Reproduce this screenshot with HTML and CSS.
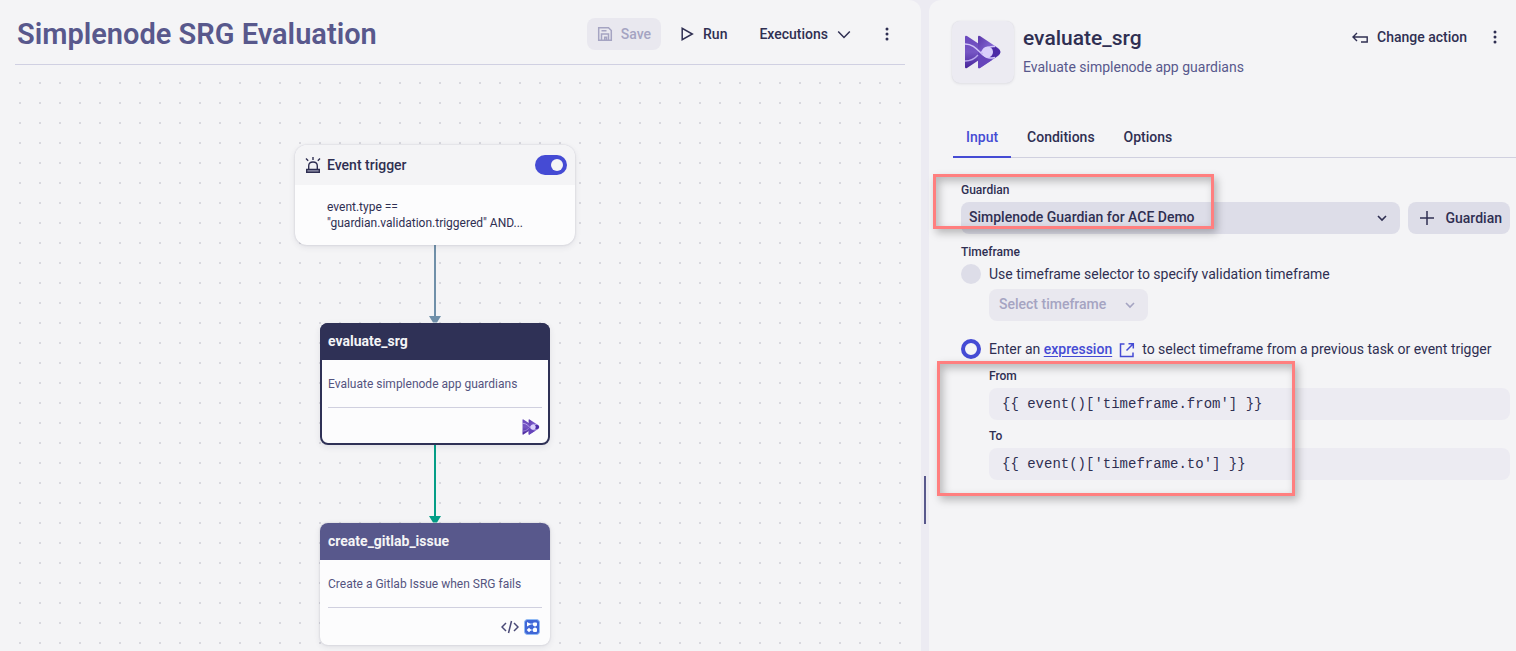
FILE: index.html
```html
<!DOCTYPE html>
<html lang="en">
<head>
<meta charset="utf-8">
<meta name="viewport" content="width=device-width, initial-scale=1">
<title>Simplenode SRG Evaluation</title>
<link rel="stylesheet" href="styles.css">
</head>
<body>
<svg class="defs" aria-hidden="true">
  <defs>
    <linearGradient id="violet" x1="0" y1="0" x2="1" y2="1">
      <stop offset="0" stop-color="#5a36a8"/><stop offset=".5" stop-color="#8568d6"/><stop offset="1" stop-color="#4526a0"/>
    </linearGradient>
    <linearGradient id="violet-dark" x1="0" y1="0" x2="0" y2="1">
      <stop offset="0" stop-color="#6a48bd"/><stop offset=".5" stop-color="#7656c4"/><stop offset="1" stop-color="#47259a"/>
    </linearGradient>
    <symbol id="guardian" viewBox="0 0 36 34">
      <path d="M0 2Q0 0 2 1L14 9V25L2 33Q0 34 0 32Z" fill="url(#violet-dark)"/>
      <path d="M13 2Q13 0 15 1L33 13Q38 17 33 21L15 33Q13 34 13 32Z" fill="url(#violet)"/>
      <path d="M13 14V32Q13 34 15 33L27 25Q19 23 13 14Z" fill="#6645bb"/>
      <path d="M0 26Q8 26 13 20" fill="none" stroke="#b9a8ee" stroke-width="1.300"/>
      <path d="M24 11.500H30L33.500 14Q37 17 33.500 20L30 22.500H24Q28 17 24 11.500Z" fill="#4c2ba6"/>
      <path d="M0 9C9 9 13 16 18 20S26 23 30 22.500M16 18C19 13 24 11 30 11.500" fill="none" stroke="#d0c4f8" stroke-width="1.500"/>
      <circle cx="22.500" cy="17" r="5.500" fill="#d9cffb"/>
    </symbol>
  </defs>
</svg>
<main class="layout">
  <section class="workflow">
    <header class="toolbar">
      <h1 class="toolbar-title">Simplenode SRG Evaluation</h1>
      <div class="toolbar-actions">
        <button class="btn btn-save" disabled>
          <svg width="16" height="16" viewBox="0 0 16 16" fill="none" stroke="currentColor" stroke-width="1.500"><path d="M1.700 1.700H11.500L14.300 4.500V14.300H1.700ZM4.500 14V8H11.500V14M4.500 4.800H9.500M7.700 14V11.300H9.500V14"/></svg>
          Save</button>
        <button class="btn">
          <svg width="13" height="16" viewBox="0 0 13 16" fill="none" stroke="currentColor" stroke-width="1.500"><path d="M1.200 2.300V13.700L11.300 8Z"/></svg>
          Run</button>
        <button class="btn">Executions
          <svg width="14" height="16" viewBox="0 0 14 16" fill="none" stroke="currentColor" stroke-width="1.500"><path d="M1.200 5.500L7 11.500L12.800 5.500"/></svg>
        </button>
        <button class="btn-menu" aria-label="Workflow menu">
          <svg width="4" height="14" viewBox="0 0 4 14" fill="currentColor"><circle cx="2" cy="2" r="1.500"/><circle cx="2" cy="7" r="1.500"/><circle cx="2" cy="12" r="1.500"/></svg>
        </button>
      </div>
    </header>
    <div class="canvas">
      <svg class="edge edge-trigger" width="12" height="78" viewBox="0 0 12 78" fill="#7090a9"><path d="M5 0H7V71H5ZM0 71H12L8 77.500H4Z"/></svg>
      <svg class="edge edge-task" width="12" height="78" viewBox="0 0 12 78" fill="#049e87"><path d="M5 0H7V71H5ZM0 71H12L8 77.500H4Z"/></svg>
      <article class="trigger">
        <div class="trigger-head">
          <svg width="16" height="18" viewBox="0 0 16 18" fill="none" stroke="#2f2f52" stroke-width="1.400"><path d="M8 1V4M1 2.500L3.200 4.700M15 2.500L12.800 4.700M3.700 13V10Q3.700 6 8 6T12.300 10V13"/><path d="M1.700 13.500H14.300V16.300H1.700Z" fill="#9d9db4"/></svg>
          <label for="trigger-on" class="trigger-name">Event trigger</label>
          <input id="trigger-on" class="switch" type="checkbox" role="switch" checked>
        </div>
        <p class="trigger-query">event.type ==<br>"guardian.validation.triggered" AND...</p>
      </article>
      <article class="task task-evaluate">
        <h2 class="task-name">evaluate_srg</h2>
        <p class="task-text">Evaluate simplenode app guardians</p>
        <div class="task-icons"><svg width="18" height="16"><use href="#guardian"/></svg></div>
      </article>
      <article class="task task-create">
        <h2 class="task-name">create_gitlab_issue</h2>
        <p class="task-text">Create a Gitlab Issue when SRG fails</p>
        <div class="task-icons">
          <svg width="18" height="14" viewBox="0 0 18 14" fill="none" stroke="#4a4a78" stroke-width="1.500"><path d="M5 3L1 7L5 11M13 3L17 7L13 11M10.500 1L7.500 13"/></svg>
          <svg width="16" height="16" viewBox="0 0 16 16"><rect x=".5" y=".5" width="15" height="15" rx="3" fill="#3f66d6" stroke="#91bbf5"/><path d="M5 5H11V11H5" fill="none" stroke="#bcd5ff"/><g fill="#fff"><path d="M3 3L7 5.200L3 7.400Z"/><rect x="9" y="3.500" width="4" height="3.500" rx="1"/><rect x="9" y="9" width="4" height="4" rx="1"/><path d="M5 8.700L7.300 11L5 13.300L2.700 11Z"/></g></svg>
        </div>
      </article>
    </div>
  </section>
  <div class="splitter"><span class="splitter-handle"></span></div>
  <aside class="panel">
    <header class="panel-head">
      <div class="panel-icon"><svg width="36" height="34"><use href="#guardian"/></svg></div>
      <div class="panel-heading">
        <h2 class="panel-title">evaluate_srg</h2>
        <p class="panel-subtitle">Evaluate simplenode app guardians</p>
      </div>
      <div class="panel-actions">
        <button class="btn btn-change">
          <svg width="16" height="14" viewBox="0 0 16 14" fill="none" stroke="currentColor" stroke-width="1.400"><path d="M5 3L1 7L5 11M1 7H15.200V12H9"/></svg>
          Change action</button>
        <button class="btn-menu" aria-label="Action menu">
          <svg width="4" height="14" viewBox="0 0 4 14" fill="currentColor"><circle cx="2" cy="2" r="1.500"/><circle cx="2" cy="7" r="1.500"/><circle cx="2" cy="12" r="1.500"/></svg>
        </button>
      </div>
    </header>
    <nav class="tabs">
      <button class="tab tab-active">Input</button>
      <button class="tab">Conditions</button>
      <button class="tab">Options</button>
    </nav>
    <form class="form">
      <label class="caption" for="guardian-select">Guardian</label>
      <div class="guardian-row">
        <div class="select-wrap">
          <select id="guardian-select" class="select"><option>Simplenode Guardian for ACE Demo</option></select>
          <svg class="select-arrow" width="10" height="8" viewBox="0 0 10 8" fill="none" stroke="#2f2f52" stroke-width="1.600"><path d="M1 2L5 6L9 2"/></svg>
        </div>
        <button type="button" class="btn btn-add">
          <svg width="16" height="16" viewBox="0 0 16 16" fill="none" stroke="currentColor" stroke-width="1.500"><path d="M8 1V15M1 8H15"/></svg>
          Guardian</button>
      </div>
      <p class="caption">Timeframe</p>
      <div class="choice">
        <input id="by-selector" class="radio" type="radio" name="timeframe">
        <label for="by-selector">Use timeframe selector to specify validation timeframe</label>
      </div>
      <div class="indent">
        <div class="select-wrap select-wrap-small">
          <select class="select" aria-label="Select timeframe" disabled><option>Select timeframe</option></select>
          <svg class="select-arrow" width="10" height="8" viewBox="0 0 10 8" fill="none" stroke="#a5a4c2" stroke-width="1.600"><path d="M1 2L5 6L9 2"/></svg>
        </div>
      </div>
      <div class="choice choice-expression">
        <input id="by-expression" class="radio" type="radio" name="timeframe" checked>
        <label for="by-expression">Enter an <a class="link" href="#expression">expression</a><svg class="external" width="16" height="16" viewBox="0 0 16 16" fill="none" stroke="#454bd4" stroke-width="1.500"><path d="M5.500 2H1.500V14.500H14V10.500M7.500 8.500L14 2M9.500 1.700H14.300V6.500"/></svg>to select timeframe from a previous task or event trigger</label>
      </div>
      <div class="indent fields">
        <label class="caption" for="from">From</label>
        <input id="from" class="code" type="text" value="{{ event()['timeframe.from'] }}">
        <label class="caption" for="to">To</label>
        <input id="to" class="code" type="text" value="{{ event()['timeframe.to'] }}">
      </div>
    </form>
    <div class="mark mark-guardian"></div>
    <div class="mark mark-range"></div>
  </aside>
</main>
</body>
</html>
```

FILE: styles.css
```css
* { box-sizing: border-box; }

body {
  margin: 0;
  background: #ecebf2;
  color: #2f2f52;
  font: 14px/20px Roboto, "Liberation Sans", sans-serif;
}

h1, h2, p { margin: 0; }
button, input, select { font: inherit; color: inherit; }
svg { flex: none; display: block; }
.defs { position: absolute; width: 0; height: 0; }

.layout {
  display: grid;
  grid-template-columns: minmax(0, 921fr) 8px minmax(0, 587fr);
  min-height: 100vh;
}

.workflow {
  display: flex;
  flex-direction: column;
  padding: 0 16px 0 15px;
  background: #f4f4f6;
  border-radius: 0 12px 0 0;
}

.toolbar {
  display: flex;
  align-items: center;
  justify-content: space-between;
  padding: 18px 2px 14px;
  border-bottom: 1px solid #d0d0e2;
}
.toolbar-title { font-size: 29px; line-height: 32px; font-weight: 600; color: #58588c; }
.toolbar-actions { display: flex; gap: 8px; }

.btn {
  display: flex;
  align-items: center;
  gap: 9px;
  height: 32px;
  padding: 0 12px;
  border: 0;
  border-radius: 8px;
  background: none;
  font-weight: 500;
  white-space: nowrap;
}
.btn-save { gap: 8px; padding: 0 10px; background: #e9e8ef; color: #a5a4c2; }
.btn-menu {
  display: grid;
  place-items: center;
  width: 32px;
  height: 32px;
  padding: 0;
  border: 0;
  background: none;
}

.canvas {
  position: relative;
  flex: 1;
  min-height: 584px;
  background: radial-gradient(circle at 5px 18px, #d8d8de 1px, transparent 1px) 0 0 / 20px 20px;
}

.edge { position: absolute; left: 414px; }
.edge-trigger { top: 180px; }
.edge-task { top: 380px; }

.trigger, .task {
  position: absolute;
  background: #fcfcfd;
  box-shadow: 0 0 2px #2f2f5233, 0 2px 6px #2f2f521a;
  overflow: hidden;
}
.trigger { left: 280px; top: 80px; width: 280px; height: 100px; border-radius: 12px; }
.trigger-head {
  display: flex;
  align-items: center;
  gap: 6px;
  height: 40px;
  padding: 0 8px 0 10px;
  background: #f4f4f6;
}
.trigger-name { flex: 1; font-weight: 500; }
.trigger-query { padding: 14px 32px; font-size: 12px; line-height: 16px; }

.switch {
  appearance: none;
  width: 32px;
  height: 20px;
  margin: 0;
  padding: 4px;
  border-radius: 10px;
  background: #454bd4;
}
.switch::before {
  content: "";
  display: block;
  width: 12px;
  height: 12px;
  margin-left: 12px;
  border-radius: 50%;
  background: #f4f4f6;
}

.task { left: 305px; width: 230px; height: 122px; border-radius: 8px; }
.task-evaluate { top: 258px; box-shadow: inset 0 0 0 2px #2f3156, 0 2px 6px #2f2f521a; }
.task-create { top: 458px; }
.task-name {
  padding: 8px 8px 9px;
  background: #58588c;
  color: #f4f4f6;
  font-size: 14px;
  line-height: 20px;
  font-weight: 700;
}
.task-evaluate .task-name { background: #2f3156; }
.task-text {
  margin: 0 8px;
  padding: 16px 0 15px;
  border-bottom: 1px solid #d0d0df;
  color: #54547f;
  font-size: 12px;
  line-height: 16px;
}
.task-icons {
  display: flex;
  align-items: center;
  justify-content: flex-end;
  gap: 5px;
  height: 38px;
  padding-right: 10px;
}

.splitter { position: relative; }
.splitter-handle { position: absolute; left: 3px; top: 476px; width: 2px; height: 48px; background: #58588c; }

.panel { position: relative; background: #f4f4f6; border-radius: 12px 0 0 0; }
.panel-head { display: flex; gap: 9px; padding: 21px 5px 0 23px; }
.panel-icon {
  display: grid;
  place-items: center;
  flex: none;
  width: 62px;
  height: 62px;
  border-radius: 8px;
  background: #ecebf2;
  box-shadow: 0 0 1px #2f2f521a, 0 1px 3px #2f2f521a;
}
.panel-heading { flex: 1; padding-top: 5px; }
.panel-title { font-size: 21px; line-height: 24px; font-weight: 500; }
.panel-subtitle { padding-top: 7px; color: #58588c; }
.panel-actions { display: flex; }

.tabs {
  display: flex;
  gap: 3px;
  margin: 35px 0 0 24px;
  border-bottom: 1px solid #d0d0df;
}
.tab {
  height: 40px;
  margin-bottom: -1px;
  padding: 0 13px;
  border: 0;
  border-bottom: 2px solid transparent;
  background: none;
  font-weight: 500;
}
.tab-active { border-color: #454bd4; color: #454bd4; }

.form { padding: 22px 6px 0 32px; }
.caption { display: block; font-size: 12px; line-height: 20px; font-weight: 500; }
.guardian-row { display: flex; gap: 8px; padding: 2px 0 8px; }

.select-wrap { position: relative; flex: 1; }
.select-wrap-small { width: 159px; }
.select {
  appearance: none;
  display: block;
  width: 100%;
  height: 32px;
  padding: 0 32px 2px 8px;
  border: 0;
  border-radius: 8px;
  background: #dddde8;
  font-weight: 500;
  opacity: 1;
}
.select:disabled { padding-left: 10px; background: #e9e8ef; color: #a5a4c2; }
.select-arrow { position: absolute; right: 13px; top: 12px; pointer-events: none; }
.btn-add { gap: 11px; padding: 0 8px 0 11px; background: #dddde8; }

.choice { display: flex; gap: 8px; padding-top: 2px; }
.choice-expression { padding-top: 18px; white-space: nowrap; }
.radio {
  appearance: none;
  flex: none;
  width: 20px;
  height: 20px;
  margin: 0;
  border-radius: 50%;
  background: #dddde8;
}
.radio:checked { border: 4px solid #454bd4; background: #f4f4f6; }
.indent { padding: 5px 0 0 28px; }
.link { color: #454bd4; font-weight: 500; text-underline-offset: 2px; }
.external { display: inline-block; margin: 0 7px; vertical-align: -4px; }
.fields { padding-top: 7px; }
.code {
  display: block;
  width: 100%;
  height: 32px;
  margin: 2px 0 6px;
  padding: 0 13px;
  border: 0;
  border-radius: 8px;
  background: #ecebf2;
  font: 14px/20px "Liberation Mono", monospace;
}

.mark {
  position: absolute;
  border: 3px solid #ff7f7f;
  box-shadow: 3px 4px 8px #00000040, inset 3px 4px 8px #00000040;
  pointer-events: none;
}
.mark-guardian { left: 4px; top: 174px; width: 281px; height: 55px; }
.mark-range { left: 8px; top: 361px; width: 358px; height: 135px; }
```
